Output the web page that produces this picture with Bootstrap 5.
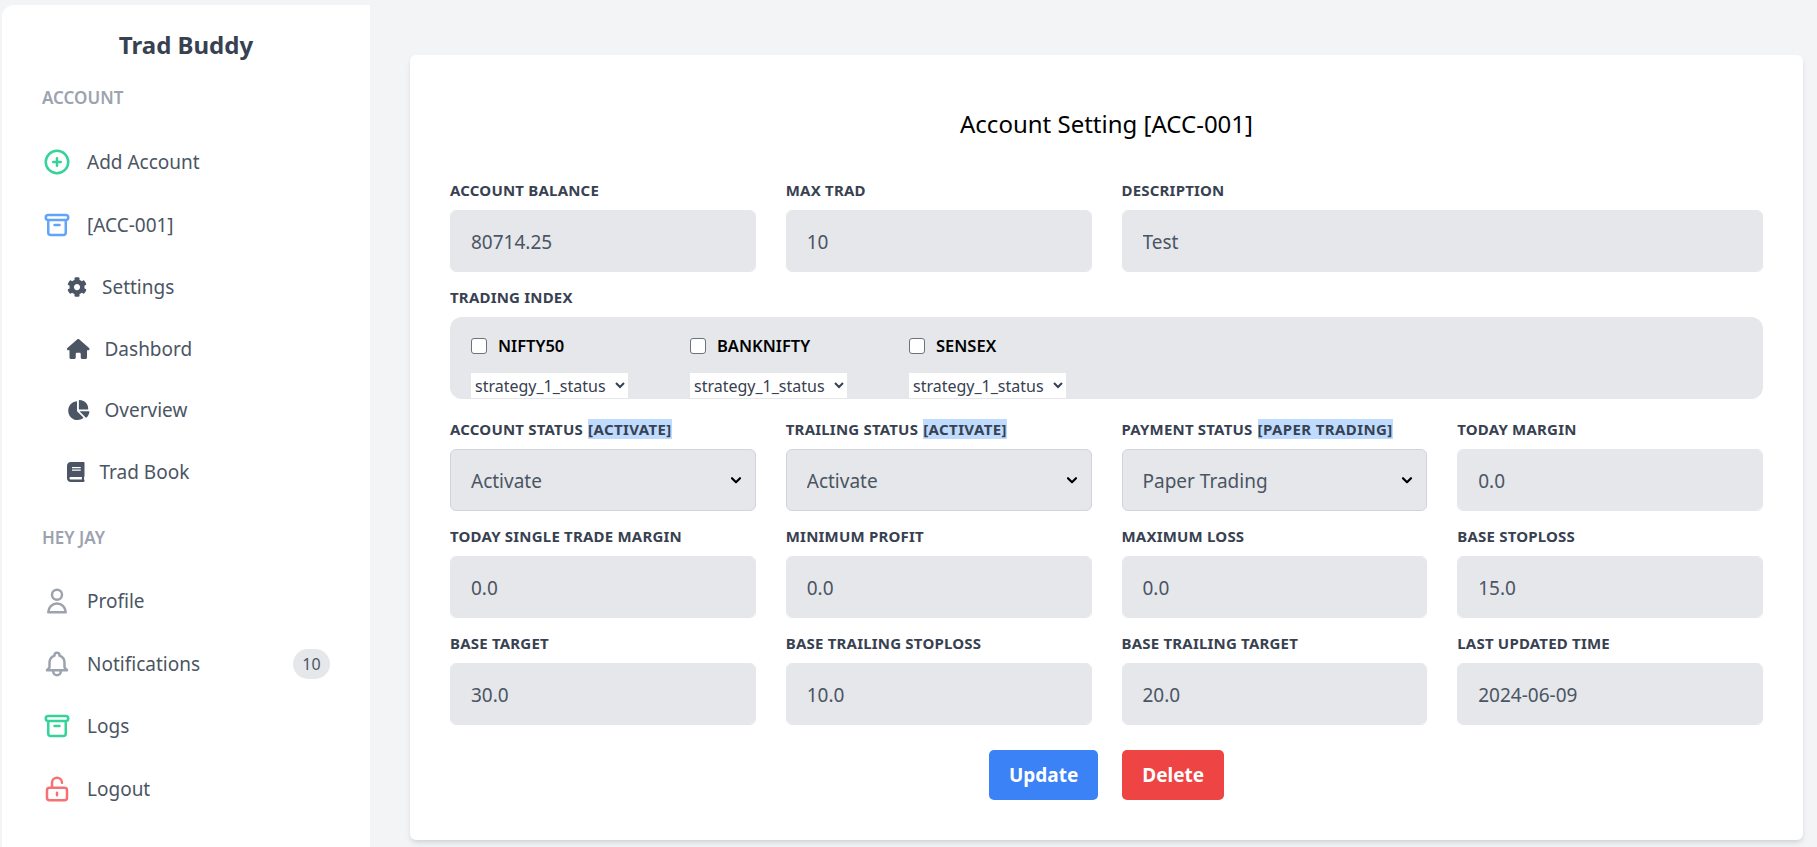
<!DOCTYPE html>
<html lang="en">
<head>
    <meta charset="UTF-8">
    <meta name="viewport" content="width=device-width, initial-scale=1.0">
    <title>Trad Buddy</title>
    <link rel="stylesheet" href="https://cdn.jsdelivr.net/npm/bootstrap@5.3.0/dist/css/bootstrap.min.css">
    <style>
        html, body { height: 100%; }
        body { background: #f3f4f6; font-family: "Noto Sans", "Open Sans", sans-serif; overflow: hidden; color: #4b5563; }
        .side { width: 368px; margin: 5px 0 0 2px; background: #fff; border-top-left-radius: 12px; flex-shrink: 0; }
        .side-title { font-size: 24px; line-height: 32px; font-weight: 700; color: #374151; text-align: center; margin: 24px 0 25px; }
        .side-head { font-size: 17px; line-height: 24px; font-weight: 600; color: #9ca3af; padding-left: 40px; }
        .side-group-a { margin-top: 21px; }
        .side-group-b { margin-top: 20px; }
        .side-item { height: 62.7px; padding-left: 40px; color: #4b5563; font-size: 19px; text-decoration: none; gap: 15px; }
        .side-item svg { width: 30px; height: 30px; fill: none; stroke-width: 2; stroke-linecap: round; stroke-linejoin: round; stroke: currentColor; }
        .side-sub { height: 61.6px; padding-left: 65px; color: #4b5563; font-size: 19px; text-decoration: none; gap: 15px; }
        .side-sub svg { height: 20px; fill: currentColor; }
        .side-gap { margin-top: 23px; }
        .ic-green { color: #34d399; }
        .ic-blue { color: #60a5fa; }
        .ic-gray { color: #9ca3af; }
        .ic-red { color: #f87171; }
        .side-count { width: 37px; height: 30px; border-radius: 15px; background: #e5e7eb; font-size: 16px; margin-left: auto; margin-right: 40px; }
        .main-area { padding: 55px 14px 7px 40px; min-width: 0; }
        .panel { background: #fff; height: 785px; border-radius: 6px; padding: 49px 40px 0; box-shadow: 0 4px 6px -1px rgba(0,0,0,.1), 0 2px 4px -1px rgba(0,0,0,.06); }
        .panel-title { font-size: 24px; line-height: 40px; font-weight: 400; color: #000; text-align: center; margin: 0 0 36px; }
        .fields { --bs-gutter-x: 30px; --bs-gutter-y: 15px; }
        .field-label { display: block; font-size: 15px; line-height: 20px; font-weight: 700; letter-spacing: .2px; color: #374151; margin: 0 0 10px; text-transform: uppercase; white-space: nowrap; }
        .field-label span { background: #bfdbfe; display: inline-block; letter-spacing: .4px; margin-left: 1px; }
        .field-box, .field-box:focus { height: 62px; padding: 2px 20px 0; background-color: #e5e7eb; border: 1px solid #e5e7eb; border-radius: 6px; font-size: 19px; color: #4b5563; box-shadow: none; }
        select.field-box, select.field-box:focus { border-color: #d1d5db; background-image: url("data:image/svg+xml,%3csvg xmlns='http://www.w3.org/2000/svg' viewBox='0 0 16 16'%3e%3cpath fill='none' stroke='%23000' stroke-linecap='round' stroke-linejoin='round' stroke-width='2.2' d='M4 6.2l4 4 4-4'/%3e%3c/svg%3e"); background-position: right 11px center; background-size: 16px 16px; }
        .index-box { height: 82px; background: #e5e7eb; border-radius: 12px; padding: 0 21px; gap: 62px; overflow: hidden; margin-bottom: 5px; }
        .index-item { width: 157px; padding-top: 21px; }
        .index-item .form-check-input { width: 16px; height: 16px; margin: 0; border-color: #6b7280; border-radius: 3px; }
        .index-item label { font-size: 16.5px; font-weight: 600; color: #000; line-height: 16px; margin-left: 3px; }
        .index-select { width: 157px; height: 25px; margin-top: 19px; border: 0; background: #fff; font-size: 16px; color: #374151; padding: 0; }
        .act-row { margin-top: 25px; }
        .act-btn { height: 50px; padding: 0 20px; font-size: 19px; font-weight: 700; color: #fff; border: 0; border-radius: 5px; }
        .act-update { background: #3b82f6; }
        .act-delete { background: #ef4444; }
    </style>
</head>
<body class="d-flex">
    <aside class="side">
        <h1 class="side-title">Trad Buddy</h1>
        <div class="side-head">ACCOUNT</div>
        <div class="side-group-a">
            <a href="#" class="side-item d-flex align-items-center">
                <svg class="ic-green" viewBox="0 0 24 24"><path d="M12 9v3m0 0v3m0-3h3m-3 0H9m12 0a9 9 0 11-18 0 9 9 0 0118 0z"/></svg>
                <span>Add Account</span>
            </a>
            <a href="#" class="side-item d-flex align-items-center">
                <svg class="ic-blue" viewBox="0 0 24 24"><path d="M5 8h14M5 8a2 2 0 110-4h14a2 2 0 110 4M5 8v10a2 2 0 002 2h10a2 2 0 002-2V8m-9 4h4"/></svg>
                <span>[ACC-001]</span>
            </a>
            <a href="#" class="side-sub d-flex align-items-center">
                <svg viewBox="0 0 512 512"><path d="M487.4 315.7l-42.6-24.6c4.3-23.2 4.3-47 0-70.2l42.6-24.6c4.9-2.8 7.1-8.6 5.5-14-11.1-35.6-30-67.8-54.7-94.6-3.8-4.1-10-5.1-14.8-2.3L380.8 110c-17.9-15.4-38.5-27.3-60.8-35.1V25.8c0-5.6-3.9-10.5-9.4-11.7-36.7-8.2-74.3-7.8-109.2 0-5.5 1.2-9.4 6.1-9.4 11.7V75c-22.2 7.9-42.8 19.8-60.8 35.1L88.7 85.5c-4.9-2.8-11-1.9-14.8 2.3-24.7 26.7-43.6 58.9-54.7 94.6-1.7 5.4.6 11.2 5.5 14L67.3 221c-4.3 23.2-4.3 47 0 70.2l-42.6 24.6c-4.9 2.8-7.1 8.6-5.5 14 11.1 35.6 30 67.8 54.7 94.6 3.8 4.1 10 5.1 14.8 2.3l42.6-24.6c17.9 15.4 38.5 27.3 60.8 35.1v49.2c0 5.6 3.9 10.5 9.4 11.7 36.7 8.2 74.3 7.8 109.2 0 5.5-1.2 9.4-6.1 9.4-11.7v-49.2c22.2-7.9 42.8-19.8 60.8-35.1l42.6 24.6c4.9 2.8 11 1.9 14.8-2.3 24.7-26.7 43.6-58.9 54.7-94.6 1.5-5.5-.7-11.3-5.6-14.1zM256 336c-44.1 0-80-35.9-80-80s35.9-80 80-80 80 35.9 80 80-35.9 80-80 80z"/></svg>
                <span>Settings</span>
            </a>
            <a href="#" class="side-sub d-flex align-items-center">
                <svg viewBox="0 0 576 512"><path d="M575.8 255.5c0 18-15 32.1-32 32.1h-32l.7 160.2c0 2.7-.2 5.4-.5 8.1V472c0 22.1-17.9 40-40 40H456c-1.1 0-2.2 0-3.3-.1c-1.4 .1-2.8 .1-4.2 .1H416 392c-22.1 0-40-17.9-40-40V448 384c0-17.7-14.3-32-32-32H256c-17.7 0-32 14.3-32 32v64 24c0 22.1-17.9 40-40 40H160 128.1c-1.5 0-3-.1-4.5-.2c-1.2 .1-2.4 .2-3.6 .2H104c-22.1 0-40-17.9-40-40V360c0-.9 0-1.9 .1-2.8V287.6H32c-18 0-32-14-32-32.1c0-9 3-17 10-24L266.4 8c7-7 15-8 22-8s15 2 21 7L564.8 231.5c8 7 12 15 11 24z"/></svg>
                <span>Dashbord</span>
            </a>
            <a href="#" class="side-sub d-flex align-items-center">
                <svg viewBox="0 0 576 512"><path d="M304 240V16.6c0-9 7-16.6 16-16.6C443.7 0 544 100.3 544 224c0 9-7.6 16-16.6 16H304zM32 272C32 150.7 122.1 50.3 239 34.3c9.2-1.3 17 6.1 17 15.4V288L412.5 444.5c6.7 6.7 6.2 17.7-1.5 23.1C371.8 495.6 323.8 512 272 512C139.5 512 32 404.6 32 272zm526.4 16c9.3 0 16.6 7.8 15.4 17c-7.7 55.9-34.6 105.6-73.9 142.3c-6 5.6-15.4 5.2-21.2-.7L320 288H558.4z"/></svg>
                <span>Overview</span>
            </a>
            <a href="#" class="side-sub d-flex align-items-center">
                <svg viewBox="0 0 448 512"><path d="M448 360V24c0-13.3-10.7-24-24-24H96C43 0 0 43 0 96v320c0 53 43 96 96 96h328c13.3 0 24-10.7 24-24v-16c0-7.5-3.5-14.3-8.9-18.7-4.2-15.4-4.2-59.3 0-74.7 5.4-4.3 8.9-11.1 8.9-18.6zM128 134c0-3.3 2.7-6 6-6h212c3.3 0 6 2.7 6 6v20c0 3.3-2.7 6-6 6H134c-3.3 0-6-2.7-6-6v-20zm0 64c0-3.3 2.7-6 6-6h212c3.3 0 6 2.7 6 6v20c0 3.3-2.7 6-6 6H134c-3.3 0-6-2.7-6-6v-20zm253.4 250H96c-17.7 0-32-14.3-32-32 0-17.6 14.4-32 32-32h285.4c-1.9 17.1-1.9 46.9 0 64z"/></svg>
                <span>Trad Book</span>
            </a>
        </div>
        <div class="side-head side-gap">HEY JAY</div>
        <div class="side-group-b">
            <a href="#" class="side-item d-flex align-items-center">
                <svg class="ic-gray" viewBox="0 0 24 24"><path d="M16 7a4 4 0 11-8 0 4 4 0 018 0zM12 14a7 7 0 00-7 7h14a7 7 0 00-7-7z"/></svg>
                <span>Profile</span>
            </a>
            <a href="#" class="side-item d-flex align-items-center">
                <svg class="ic-gray" viewBox="0 0 24 24"><path d="M15 17h5l-1.405-1.405A2.032 2.032 0 0118 14.158V11a6.002 6.002 0 00-4-5.659V5a2 2 0 10-4 0v.341C7.67 6.165 6 8.388 6 11v3.159c0 .538-.214 1.055-.595 1.436L4 17h5m6 0v1a3 3 0 11-6 0v-1m6 0H9"/></svg>
                <span>Notifications</span>
                <span class="side-count d-flex align-items-center justify-content-center">10</span>
            </a>
            <a href="#" class="side-item d-flex align-items-center">
                <svg class="ic-green" viewBox="0 0 24 24"><path d="M5 8h14M5 8a2 2 0 110-4h14a2 2 0 110 4M5 8v10a2 2 0 002 2h10a2 2 0 002-2V8m-9 4h4"/></svg>
                <span>Logs</span>
            </a>
            <a href="#" class="side-item d-flex align-items-center">
                <svg class="ic-red" viewBox="0 0 24 24"><path d="M8 11V7a4 4 0 118 0m-4 8v2m-6 4h12a2 2 0 002-2v-6a2 2 0 00-2-2H6a2 2 0 00-2 2v6a2 2 0 002 2z"/></svg>
                <span>Logout</span>
            </a>
        </div>
    </aside>

    <main class="main-area flex-grow-1">
        <div class="panel">
            <h2 class="panel-title">Account Setting [ACC-001]</h2>
            <form>
                <div class="row fields">
                    <div class="col-3">
                        <label class="field-label">Account Balance</label>
                        <input class="form-control field-box" type="text" value="80714.25">
                    </div>
                    <div class="col-3">
                        <label class="field-label">Max Trad</label>
                        <input class="form-control field-box" type="text" value="10">
                    </div>
                    <div class="col-6">
                        <label class="field-label">Description</label>
                        <input class="form-control field-box" type="text" value="Test">
                    </div>

                    <div class="col-12">
                        <label class="field-label">Trading Index</label>
                        <div class="index-box d-flex">
                            <div class="index-item">
                                <div class="d-flex align-items-center gap-2">
                                    <input class="form-check-input" type="checkbox" id="idx1">
                                    <label for="idx1">NIFTY50</label>
                                </div>
                                <select class="index-select d-block"><option>strategy_1_status</option></select>
                            </div>
                            <div class="index-item">
                                <div class="d-flex align-items-center gap-2">
                                    <input class="form-check-input" type="checkbox" id="idx2">
                                    <label for="idx2">BANKNIFTY</label>
                                </div>
                                <select class="index-select d-block"><option>strategy_1_status</option></select>
                            </div>
                            <div class="index-item">
                                <div class="d-flex align-items-center gap-2">
                                    <input class="form-check-input" type="checkbox" id="idx3">
                                    <label for="idx3">SENSEX</label>
                                </div>
                                <select class="index-select d-block"><option>strategy_1_status</option></select>
                            </div>
                        </div>
                    </div>

                    <div class="col-3">
                        <label class="field-label">Account Status <span>[Activate]</span></label>
                        <select class="form-select field-box"><option>Activate</option></select>
                    </div>
                    <div class="col-3">
                        <label class="field-label">Trailing Status <span>[Activate]</span></label>
                        <select class="form-select field-box"><option>Activate</option></select>
                    </div>
                    <div class="col-3">
                        <label class="field-label">Payment Status <span>[Paper Trading]</span></label>
                        <select class="form-select field-box"><option>Paper Trading</option></select>
                    </div>
                    <div class="col-3">
                        <label class="field-label">Today Margin</label>
                        <input class="form-control field-box" type="text" value="0.0">
                    </div>

                    <div class="col-3">
                        <label class="field-label">Today Single Trade Margin</label>
                        <input class="form-control field-box" type="text" value="0.0">
                    </div>
                    <div class="col-3">
                        <label class="field-label">Minimum Profit</label>
                        <input class="form-control field-box" type="text" value="0.0">
                    </div>
                    <div class="col-3">
                        <label class="field-label">Maximum Loss</label>
                        <input class="form-control field-box" type="text" value="0.0">
                    </div>
                    <div class="col-3">
                        <label class="field-label">Base Stoploss</label>
                        <input class="form-control field-box" type="text" value="15.0">
                    </div>

                    <div class="col-3">
                        <label class="field-label">Base Target</label>
                        <input class="form-control field-box" type="text" value="30.0">
                    </div>
                    <div class="col-3">
                        <label class="field-label">Base Trailing Stoploss</label>
                        <input class="form-control field-box" type="text" value="10.0">
                    </div>
                    <div class="col-3">
                        <label class="field-label">Base Trailing Target</label>
                        <input class="form-control field-box" type="text" value="20.0">
                    </div>
                    <div class="col-3">
                        <label class="field-label">Last Updated Time</label>
                        <input class="form-control field-box" type="text" value="2024-06-09">
                    </div>

                    <div class="col-12 act-row d-flex justify-content-center gap-4">
                        <button type="button" class="btn act-btn act-update">Update</button>
                        <button type="button" class="btn act-btn act-delete">Delete</button>
                    </div>
                </div>
            </form>
        </div>
    </main>
    <script src="https://cdn.jsdelivr.net/npm/bootstrap@5.3.0/dist/js/bootstrap.bundle.min.js"></script>
</body>
</html>
